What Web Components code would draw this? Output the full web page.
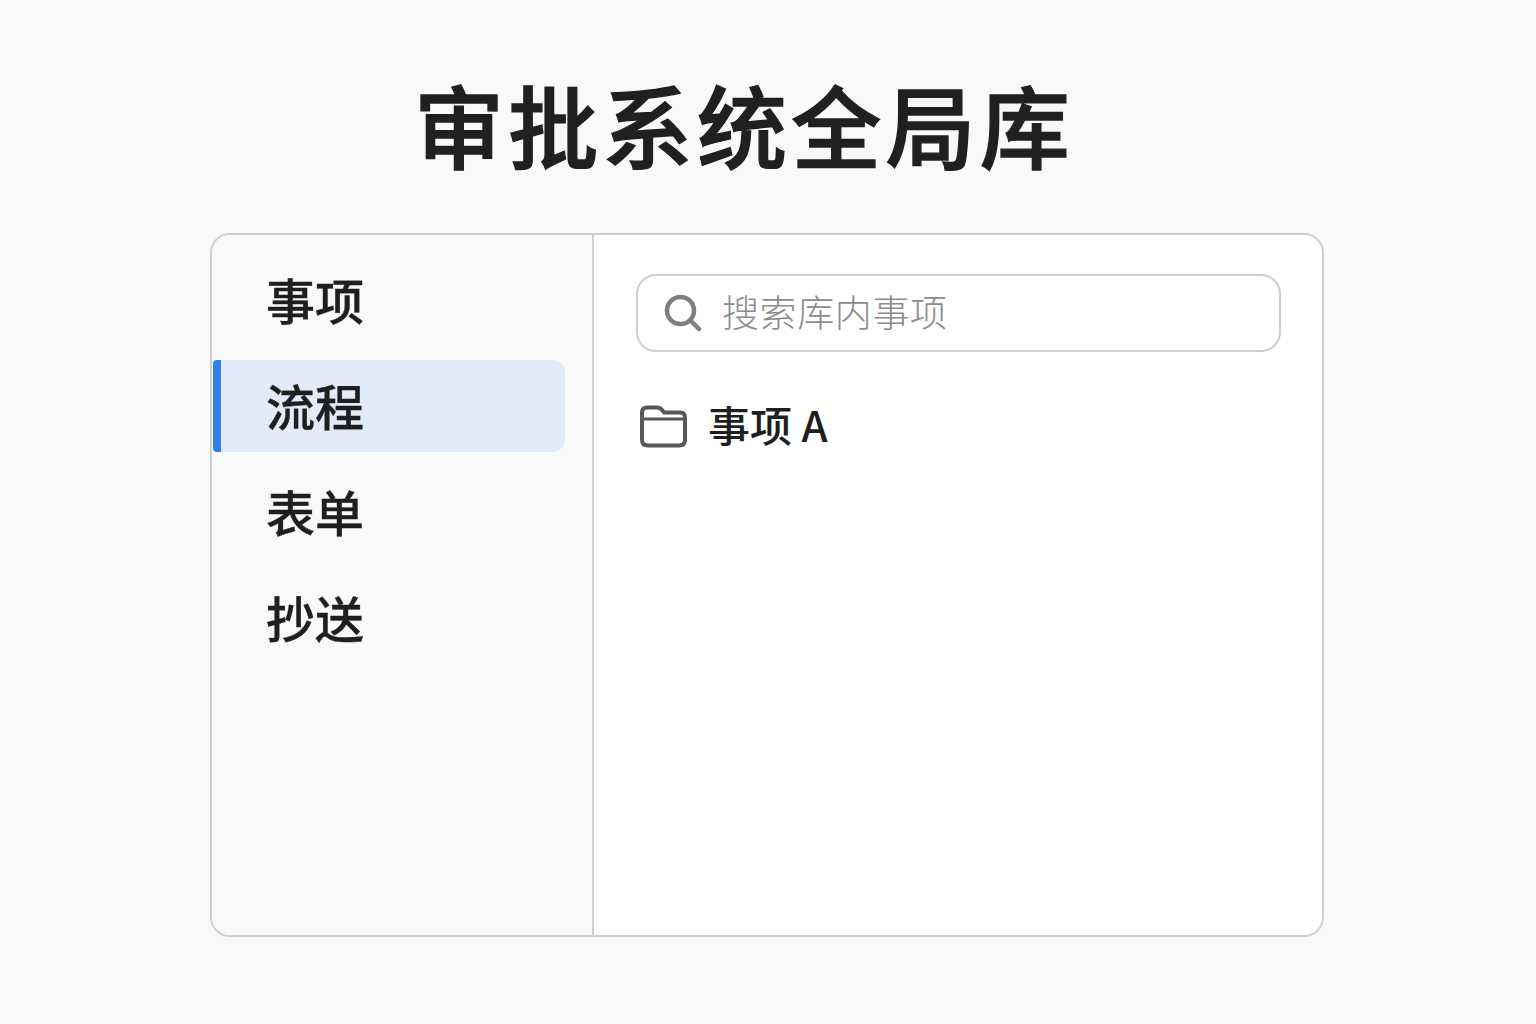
<!DOCTYPE html>
<html lang="zh-CN">
<head>
<meta charset="utf-8">
<title>审批系统全局库</title>
<style>
  html, body { margin: 0; height: 100%; }
  body {
    background: #f9f9f9;
    color: #1f1f1f;
    font-family: "Noto Sans CJK SC", "Noto Sans", sans-serif;
  }
</style>
</head>
<body>
<library-page heading="审批系统全局库">
  <nav-item slot="nav">事项</nav-item>
  <nav-item slot="nav" active>流程</nav-item>
  <nav-item slot="nav">表单</nav-item>
  <nav-item slot="nav">抄送</nav-item>
  <search-box slot="main" placeholder="搜索库内事项"></search-box>
  <folder-row slot="main">事项 A</folder-row>
</library-page>

<script>
class LibraryPage extends HTMLElement {
  connectedCallback() {
    this.attachShadow({ mode: 'open' });
    this.shadowRoot.innerHTML = `
      <style>
        :host { display: block; width: 1536px; height: 1024px; padding: 0 212px 0 210px; box-sizing: border-box; }
        h1 {
          margin: 0;
          height: 233px;
          padding: 12px 0 0 204px;
          box-sizing: border-box;
          display: flex;
          align-items: center;
          font-size: 90px;
          line-height: 1;
          font-weight: 500;
          -webkit-text-stroke: 1.4px #202020;
          letter-spacing: 4.3px;
          color: #202020;
        }
        .panel {
          height: 704px;
          box-sizing: border-box;
          display: flex;
          background: #fff;
          border: 2px solid #cfcfcf;
          border-radius: 20px;
          overflow: hidden;
        }
        aside {
          width: 382px;
          flex: none;
          box-sizing: border-box;
          padding: 19px 27px 0 1px;
          background: #f9f9f9;
          border-right: 2px solid #cfcfcf;
          display: flex;
          flex-direction: column;
          gap: 14px;
        }
        main {
          flex: 1;
          padding: 39px 41px 0 42px;
          display: flex;
          flex-direction: column;
          gap: 46px;
        }
      </style>
      <h1>${this.getAttribute('heading')}</h1>
      <section class="panel">
        <aside><slot name="nav"></slot></aside>
        <main><slot name="main"></slot></main>
      </section>
    `;
  }
}

class NavItem extends HTMLElement {
  connectedCallback() {
    this.attachShadow({ mode: 'open' });
    this.shadowRoot.innerHTML = `
      <style>
        :host {
          display: flex;
          align-items: center;
          height: 92px;
          box-sizing: border-box;
          padding-left: 53px;
          font-size: 49px;
          line-height: 1;
          font-weight: 500;
          -webkit-text-stroke: 0.35px #1f1f1f;
          color: #1f1f1f;
          border-radius: 0 12px 12px 0;
        }
        :host([active]) {
          padding-left: 45px;
          background: #e3ebfa;
          border-left: 8px solid #2f7fef;
          border-radius: 4px 12px 12px 4px;
        }
        span { position: relative; top: -2px; }
      </style>
      <span><slot></slot></span>
    `;
  }
}

class SearchBox extends HTMLElement {
  connectedCallback() {
    this.attachShadow({ mode: 'open' });
    this.shadowRoot.innerHTML = `
      <style>
        :host {
          display: flex;
          align-items: center;
          gap: 20px;
          height: 78px;
          box-sizing: border-box;
          padding-left: 26px;
          background: #fff;
          border: 2px solid #cfcfcf;
          border-radius: 20px;
          font-size: 37px;
          font-weight: 300;
          letter-spacing: 0.6px;
          color: #8c8c8c;
        }
        svg { flex: none; display: block; }
        span { position: relative; top: -2px; }
      </style>
      <svg width="38" height="38" viewBox="0 0 38 38" fill="none" stroke="#7f7f7f" stroke-width="4.5" stroke-linecap="round">
        <circle cx="16.5" cy="16.5" r="13.5"/>
        <path d="M26.5 26.5 L35 35"/>
      </svg>
      <span>${this.getAttribute('placeholder')}</span>
    `;
  }
}

class FolderRow extends HTMLElement {
  connectedCallback() {
    this.attachShadow({ mode: 'open' });
    this.shadowRoot.innerHTML = `
      <style>
        :host {
          display: flex;
          align-items: center;
          gap: 22px;
          height: 56px;
          padding-left: 3px;
          font-size: 42px;
          line-height: 1;
          font-weight: 500;
          color: #1f1f1f;
        }
        svg { flex: none; display: block; }
        span { position: relative; top: -2px; left: -1px; }
      </style>
      <svg width="48" height="44" viewBox="0 0 48 44" fill="none" stroke="#585858" stroke-width="4" stroke-linejoin="round">
        <path d="M3 9 Q3 3.5 8 3.5 H18 Q21 3.5 23 6 L25 8.5 H41 Q46 8.5 46 13.5 V36 Q46 41.5 40 41.5 H9 Q3 41.5 3 36 Z"/>
        <path d="M3 15 H46" stroke-width="3"/>
      </svg>
      <span><slot></slot></span>
    `;
  }
}

customElements.define('library-page', LibraryPage);
customElements.define('nav-item', NavItem);
customElements.define('search-box', SearchBox);
customElements.define('folder-row', FolderRow);
</script>
</body>
</html>
